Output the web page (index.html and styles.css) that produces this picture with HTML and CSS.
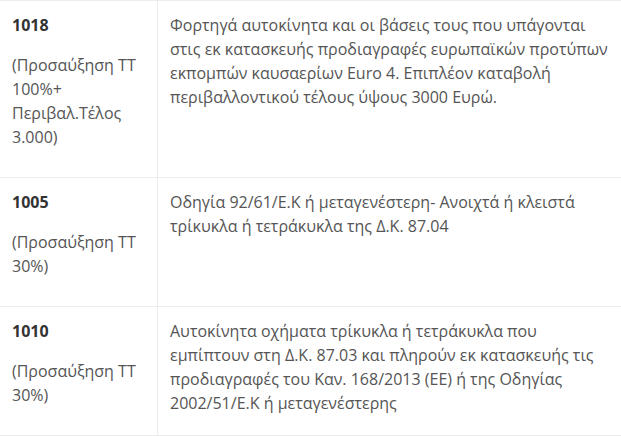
FILE: index.html
```html
<!DOCTYPE html>
<html lang="el">
<head>
<meta charset="utf-8">
<link rel="stylesheet" href="styles.css">
</head>
<body>
<table class="codes">
  <tr>
    <td class="code">
      <p><strong>1018</strong></p>
      <p>(Προσαύξηση ΤΤ 100%+ Περιβαλ.Τέλος 3.000)</p>
    </td>
    <td class="desc">
      <p>Φορτηγά αυτοκίνητα και οι βάσεις τους που υπάγονται στις εκ κατασκευής προδιαγραφές ευρωπαϊκών προτύπων εκπομπών καυσαερίων Euro 4. Επιπλέον καταβολή περιβαλλοντικού τέλους ύψους 3000 Ευρώ.</p>
    </td>
  </tr>
  <tr>
    <td class="code">
      <p><strong>1005</strong></p>
      <p>(Προσαύξηση ΤΤ 30%)</p>
    </td>
    <td class="desc">
      <p>Οδηγία 92/61/Ε.Κ ή μεταγενέστερη- Ανοιχτά ή κλειστά τρίκυκλα ή τετράκυκλα της Δ.Κ. 87.04</p>
    </td>
  </tr>
  <tr>
    <td class="code">
      <p><strong>1010</strong></p>
      <p>(Προσαύξηση ΤΤ 30%)</p>
    </td>
    <td class="desc">
      <p>Αυτοκίνητα οχήματα τρίκυκλα ή τετράκυκλα που<br>εμπίπτουν στη Δ.Κ. 87.03 και πληρούν εκ κατασκευής τις προδιαγραφές του Καν. 168/2013 (ΕΕ) ή της Οδηγίας <span class="nowrap">2002/51/Ε.Κ</span> ή μεταγενέστερης</p>
    </td>
  </tr>
</table>
</body>
</html>
```
FILE: styles.css
```css
html, body {
  margin: 0;
  padding: 0;
  background: #fff;
}
body {
  font-family: "Open Sans", "Noto Sans", sans-serif;
  font-size: 16px;
  line-height: 24px;
  color: #555;
}
.codes {
  border-collapse: collapse;
  width: 621px;
}
.codes td {
  border-top: 1px solid #ececec;
  border-bottom: 1px solid #ececec;
  vertical-align: top;
  padding: 12px;
}
.codes td.code {
  width: 133px;
  border-right: 1px solid #ececec;
}
.codes p {
  margin: 0 0 16px 0;
}
.codes td.desc p {
  margin: 0;
}
.codes strong {
  color: #333;
  font-weight: 700;
}
.nowrap {
  white-space: nowrap;
}
```
